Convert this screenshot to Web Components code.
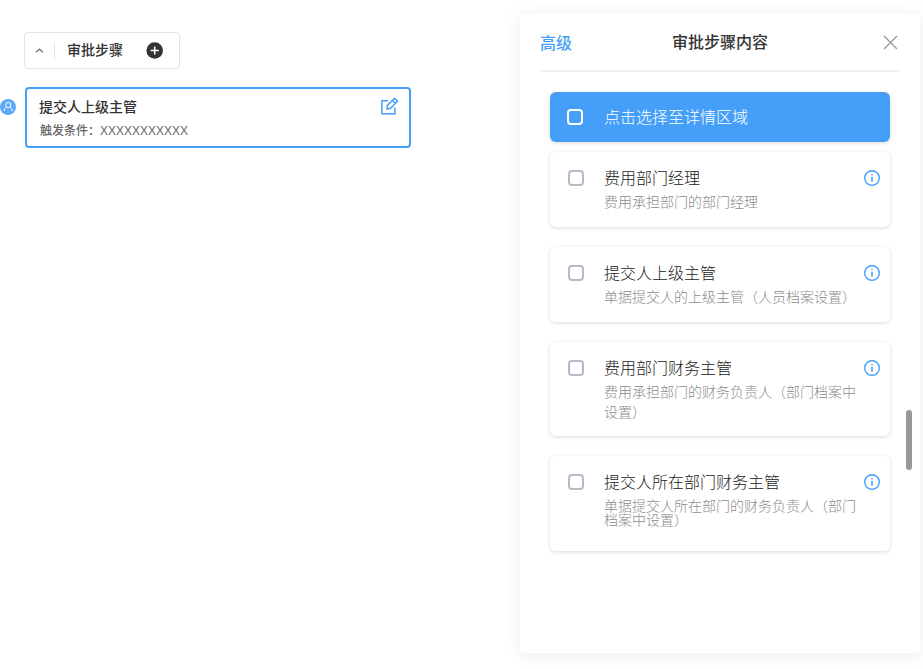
<!DOCTYPE html>
<html lang="zh-CN">
<head>
<meta charset="utf-8">
<title>审批步骤</title>
<style>
html,body{margin:0;height:100%;background:#fff;overflow:hidden}
body{font-family:"Liberation Sans","Noto Sans CJK SC",sans-serif;color:#333}
</style>
</head>
<body>
<approval-page></approval-page>
<script>
class BaseElement extends HTMLElement {
  constructor() {
    super();
    this.attachShadow({ mode: 'open' }).innerHTML =
      '<style>*{box-sizing:border-box}svg{display:block}</style>' + this.constructor.markup;
  }
}

customElements.define('step-toolbar', class extends BaseElement {
  static markup = `
  <style>
    :host{box-sizing:border-box;display:flex;align-items:center;width:156px;height:37px;border:1px solid #e3e3e3;border-radius:4px;padding:0 16px 0 10px;background:#fff}
    .divider{width:1px;height:16px;background:#e3e3e3;margin:0 12px 0 9px}
    .label{font-size:14px;line-height:20px;font-weight:500;margin-right:auto;padding-bottom:2px}
  </style>
  <svg width="10" height="10" viewBox="0 0 10 10" fill="none" stroke="#666" stroke-width="1.2"><path d="M1 6.4 4.5 3l3.5 3.4"/></svg>
  <span class="divider"></span>
  <span class="label"><slot></slot></span>
  <svg width="17" height="17" viewBox="0 0 17 17"><circle cx="8.7" cy="8.5" r="8.3" fill="#333"/><path d="M8.7 4.4v8.2M4.6 8.5h8.2" stroke="#fff" stroke-width="1.5"/></svg>`;
});

customElements.define('user-badge', class extends BaseElement {
  static markup = `
  <style>:host{display:block;width:16px;height:16px}</style>
  <svg width="16" height="16" viewBox="0 0 16 16"><circle cx="8" cy="8" r="8" fill="#5caaf8"/><g fill="none" stroke="#fff" stroke-width="1"><circle cx="8.3" cy="6" r="2.6"/><path d="M6.7 8.2C5.2 9 4.4 10 4.2 12.1M9.9 8.2c1.5.8 2.3 1.8 2.5 3.9"/></g></svg>`;
});

customElements.define('step-card', class extends BaseElement {
  static markup = `
  <style>
    :host{box-sizing:border-box;display:flex;justify-content:space-between;width:386px;height:61px;border:2px solid #459ff8;border-radius:4px;padding:8px 10px 0 12px;background:#fff}
    .title{font-size:14px;line-height:20px;font-weight:500}
    .cond{font-size:12px;line-height:18px;font-weight:500;color:#666;margin:5px 0 0 1px}
  </style>
  <div><div class="title"><slot></slot></div><div class="cond"><slot name="condition"></slot></div></div>
  <svg width="19" height="19" viewBox="0 0 19 19" fill="none" stroke="#459ff8" stroke-width="1.5"><path d="M8.1 3.7H1.9v13.1h13v-6.4"/><path d="m7 12 .5-3.8 7.1-6.9 2.9 2.9-6.9 7.1z M12.4 3.4l3 3"/></svg>`;
});

customElements.define('check-box', class extends BaseElement {
  static markup = `
  <style>:host{box-sizing:border-box;display:block;width:16px;height:16px;border:2px solid var(--box-color,#b4bccb);border-radius:4px}</style>`;
});

customElements.define('info-icon', class extends BaseElement {
  static markup = `
  <style>:host{display:block}</style>
  <svg width="16" height="16" viewBox="0 0 16 16"><circle cx="8" cy="8" r="7.3" fill="none" stroke="#459ff8" stroke-width="1.4"/><path d="M7.1 4h1.8v1.3H7.1zM7.1 6.8h1.8v5H7.1z" fill="#62aff9"/></svg>`;
});

customElements.define('select-banner', class extends BaseElement {
  static markup = `
  <style>
    :host{box-sizing:border-box;display:flex;align-items:center;gap:21px;height:50px;padding:0 17px;border-radius:6px;background:#459ff8;color:#fff;font-size:16px;line-height:24px;font-weight:300;box-shadow:0 1px 4px rgba(0,0,0,.15);--box-color:#fff}
    span{padding-top:2px}
  </style>
  <check-box></check-box><span><slot></slot></span>`;
});

customElements.define('option-card', class extends BaseElement {
  static markup = `
  <style>
    :host{box-sizing:border-box;display:flex;align-items:flex-start;min-height:75px;padding:15px 10px 14px 18px;border-radius:6px;background:#fff;box-shadow:0 1px 4px rgba(0,0,0,.15);font-weight:300}
    check-box,info-icon{margin-top:3px;flex:none}
    .text{width:254px;margin:0 auto 0 20px}
    .title{font-size:16px;line-height:24px;color:#222}
    .desc{font-size:14px;line-height:var(--desc-line,20px);margin-top:var(--desc-top,1px);color:#8c8c8c}
  </style>
  <check-box></check-box>
  <div class="text"><div class="title"><slot name="title"></slot></div><div class="desc"><slot></slot></div></div>
  <info-icon></info-icon>`;
});

customElements.define('side-panel', class extends BaseElement {
  static markup = `
  <style>
    :host{box-sizing:border-box;display:block;position:relative;width:400px;height:639px;padding:0 20px;background:#fff;box-shadow:0 2px 16px rgba(0,0,0,.08)}
    header{display:grid;grid-template-columns:1fr auto 1fr;align-items:center;height:58px;border-bottom:2px solid #f1f1f1;font-size:16px;line-height:24px;font-weight:500}
    .mode{color:#459ff8;padding-top:4px}
    .name{padding-top:2px}
    .close{justify-self:end;margin-right:2px}
    main{padding:20px 10px 0}
    .scroll{position:absolute;right:8px;top:396px;width:6px;height:60px;border-radius:3px;background:#999}
  </style>
  <header>
    <span class="mode"><slot name="mode"></slot></span><span class="name"><slot name="title"></slot></span>
    <svg class="close" width="15" height="15" viewBox="0 0 15 15"><path d="m1 1 13 13M14 1 1 14" stroke="#999" stroke-width="1.4"/></svg>
  </header>
  <main><slot></slot></main><div class="scroll"></div>`;
});

customElements.define('approval-page', class extends BaseElement {
  static markup = `
  <style>
    :host{box-sizing:border-box;display:flex;justify-content:space-between;width:923px;height:669px;padding:14px 3px 0 0;overflow:hidden}
    .flow{padding-top:18px}
    step-toolbar{margin-left:24px}
    .row{display:flex;align-items:flex-start;gap:9px;margin-top:18px}
    user-badge{margin-top:12px}
    .list{display:grid;gap:20px;margin-top:10px}
    .tall{height:94px}
    .compact{height:95px;--desc-line:14px;--desc-top:4px}
  </style>
  <section class="flow">
    <step-toolbar>审批步骤</step-toolbar>
    <div class="row"><user-badge></user-badge><step-card>提交人上级主管<span slot="condition">触发条件：XXXXXXXXXXX</span></step-card></div>
  </section>
  <side-panel>
    <span slot="mode">高级</span><span slot="title">审批步骤内容</span>
    <select-banner>点击选择至详情区域</select-banner>
    <div class="list">
      <option-card><span slot="title">费用部门经理</span>费用承担部门的部门经理</option-card>
      <option-card><span slot="title">提交人上级主管</span>单据提交人的上级主管（人员档案设置）</option-card>
      <option-card class="tall"><span slot="title">费用部门财务主管</span>费用承担部门的财务负责人（部门档案中设置）</option-card>
      <option-card class="compact"><span slot="title">提交人所在部门财务主管</span>单据提交人所在部门的财务负责人（部门档案中设置）</option-card>
    </div>
  </side-panel>`;
});
</script>
</body>
</html>
